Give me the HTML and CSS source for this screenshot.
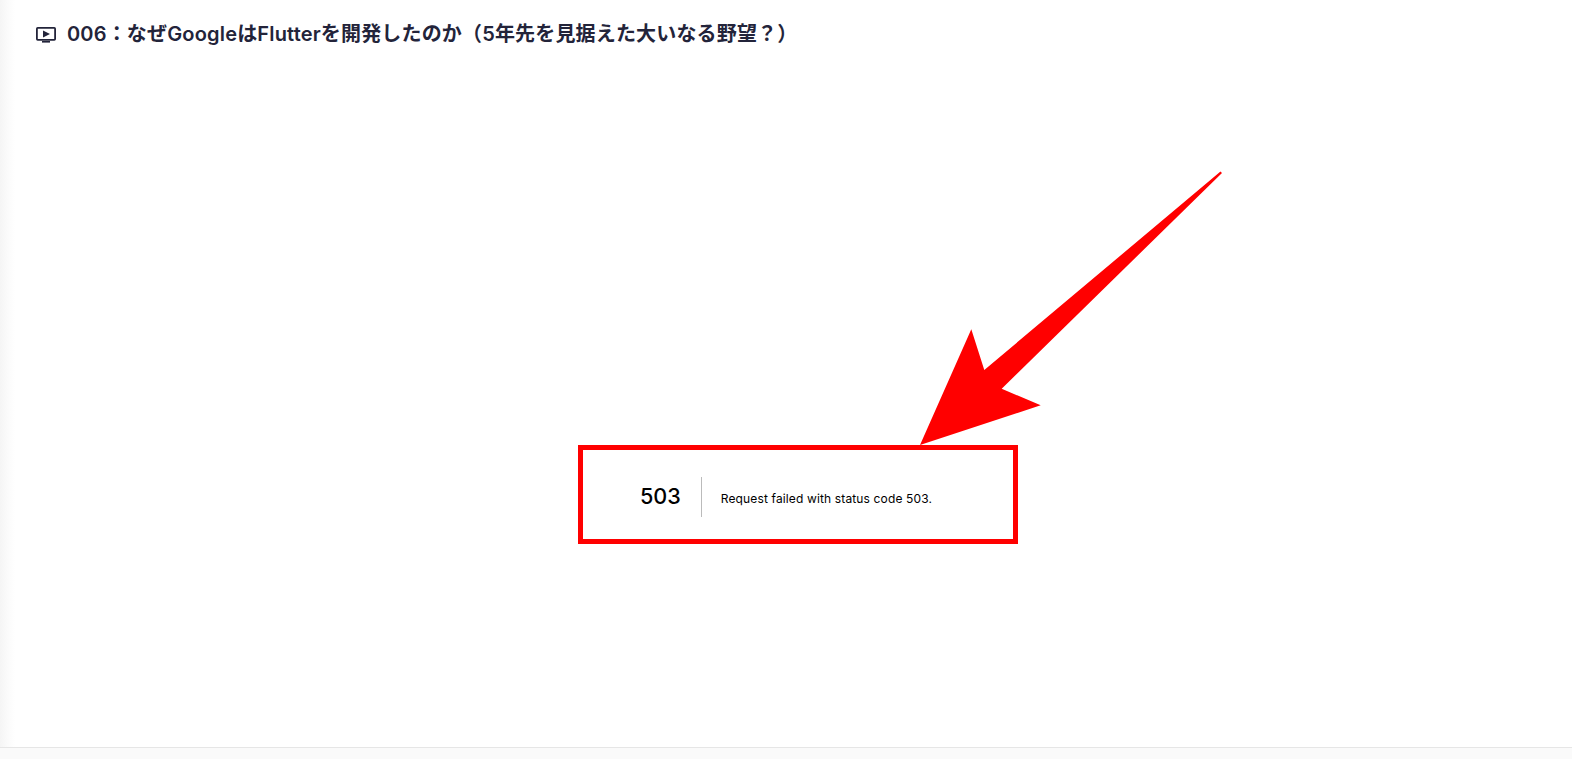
FILE: index.html
```html
<!DOCTYPE html>
<html lang="ja">
<head>
<meta charset="utf-8">
<title>006</title>
<link rel="stylesheet" href="styles.css">
</head>
<body>
<div class="page">
  <main class="content">
    <header class="lesson-header">
      <svg class="lesson-icon" viewBox="0 0 20 16" width="20" height="16" aria-hidden="true">
        <rect x="0.9" y="0.9" width="18.2" height="12" rx="0.8" fill="none" stroke="#23243a" stroke-width="1.8"/>
        <path d="M7 3.4 L14 6.9 L7 10.4 Z" fill="#23243a"/>
        <rect x="6" y="14" width="8" height="1.6" fill="#23243a"/>
      </svg>
      <h1 class="lesson-title">006：なぜGoogleはFlutterを開発したのか（5年先を見据えた大いなる野望？）</h1>
    </header>
    <section class="error-wrap">
      <div class="error">
        <h2 class="error-code">503</h2>
        <p class="error-message">Request failed with status code 503.</p>
      </div>
    </section>
  </main>
  <footer class="footer"></footer>
</div>
<div class="highlight-box"></div>
<svg class="arrow" viewBox="0 0 1572 759" width="1572" height="759" aria-hidden="true">
  <polygon points="920,445 971.3,329.3 984.3,370 1220.5,171.5 1222,173 1001.7,388.7 1040.7,405.3" fill="#ff0000"/>
</svg>
</body>
</html>
```
FILE: styles.css
```css
* { box-sizing: border-box; }
html, body { margin: 0; height: 100%; overflow: hidden; background: #fff; }
body { font-family: Inter, "Noto Sans CJK JP", sans-serif; position: relative; }
.page { display: flex; flex-direction: column; height: 759px; }
.content {
  flex: 1;
  display: flex;
  flex-direction: column;
  background: linear-gradient(to right, #f5f5f5 0, #fbfbfb 8px, #fff 15px);
}
.lesson-header {
  display: flex;
  align-items: center;
  gap: 11px;
  padding: 8px 0 0 36px;
  height: 59px;
}
.lesson-icon { flex: none; margin-top: 3px; }
.lesson-title {
  margin: 0;
  font-size: 20px;
  font-weight: 600;
  letter-spacing: 0.17px;
  color: #23243a;
  line-height: 20px;
  white-space: nowrap;
}
.error-wrap { flex: 1; display: flex; align-items: flex-start; justify-content: center; padding-top: 418px; }
.error { display: flex; align-items: center; height: 40px; }
.error-code {
  margin: 0 19px 0 0;
  padding-right: 20px;
  height: 40px;
  line-height: 38px;
  font-size: 21.6px;
  font-weight: 500;
  color: #000;
  border-right: 1px solid #bbb;
}
.error-message { margin: 0; padding-top: 4px; font-size: 12px; letter-spacing: 0.14px; color: #000; line-height: 40px; }
.footer { height: 12px; flex: none; background: #fafafa; border-top: 1px solid #e6e6e6; }
.highlight-box {
  position: absolute;
  left: 578px;
  top: 445px;
  width: 440px;
  height: 99px;
  border: 5px solid #ff0000;
}
.arrow { position: absolute; left: 0; top: 0; pointer-events: none; }
```
